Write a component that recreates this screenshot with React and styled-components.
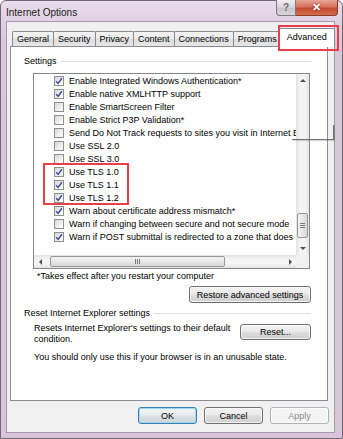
import React from 'react';
import styled, { createGlobalStyle } from 'styled-components';

const GlobalStyle = createGlobalStyle`
  html, body { margin: 0; padding: 0; background: #fff; }
  body {
    font-family: "Liberation Sans", Arial, sans-serif;
    font-size: 9px;
    color: #000;
  }
  * { box-sizing: border-box; }
`;

const Window = styled.div`
  width: 343px;
  height: 439px;
  display: flex;
  flex-direction: column;
  padding: 0 7px 5px 5px;
  background: linear-gradient(#e9dcec, #d9c6dd 40px, #d8c5dc);
  border: 1px solid #6f6873;
  border-radius: 6px 6px 0 0;
`;

const TitleBar = styled.div`
  height: 21px;
  display: flex;
  justify-content: space-between;
  align-items: flex-start;
  margin: -1px -4px 0 0;
`;

const Title = styled.div`
  font-size: 10px;
  line-height: 12px;
  padding-top: 7px;
  color: #1b1b1b;
`;

const Caption = styled.div`
  display: flex;
  margin-right: 1px;
`;

const CaptionButton = styled.div`
  height: 16px;
  width: ${p => (p.$close ? '42px' : '20px')};
  display: flex;
  align-items: center;
  justify-content: center;
  border: 1px solid ${p => (p.$close ? '#8a3b2c' : '#7d7a82')};
  border-top: none;
  border-left: ${p => (p.$close ? 'none' : '1px solid #7d7a82')};
  border-radius: ${p => (p.$close ? '0 0 4px 0' : '0 0 0 4px')};
  background: ${p =>
    p.$close
      ? 'linear-gradient(#e8a695, #d7725c 45%, #c44a2f 55%, #d46a4c)'
      : 'linear-gradient(#f1eef2, #dcd6de 45%, #cbc4ce 55%, #d9d2db)'};
  color: ${p => (p.$close ? '#fff' : '#6c6c72')};
  font-size: ${p => (p.$close ? '11px' : '10px')};
  font-weight: bold;
  text-shadow: ${p => (p.$close ? '0 0 2px #5a1d10' : 'none')};
`;

const Client = styled.div`
  flex: 1;
  display: flex;
  flex-direction: column;
  background: #f0f0f0;
  border: 1px solid #a698aa;
  padding: 0 6px 0 3px;
`;

const TabStrip = styled.div`
  height: 24px;
  display: flex;
  align-items: flex-end;
  padding-left: 2px;
`;

const Tab = styled.div`
  position: relative;
  height: ${p => (p.$active ? '19px' : '15px')};
  line-height: ${p => (p.$active ? '17px' : '15px')};
  padding: 0 ${p => (p.$active ? '7px' : '4px')};
  margin: 0 ${p => (p.$active ? '-2px' : '0')} ${p => (p.$active ? '-1px' : '0')} ${p => (p.$active ? '-3px' : '-1px')};
  border: 1px solid #898c95;
  border-bottom: none;
  border-radius: 2px 2px 0 0;
  background: ${p => (p.$active ? '#fff' : 'linear-gradient(#f3f3f3, #ebebeb 50%, #dddddd 51%, #e6e6e6)')};
  z-index: ${p => (p.$active ? 2 : 0)};
  white-space: nowrap;

  &:first-child { margin-left: 0; }

  ${p =>
    p.$marked &&
    `
    &::after {
      content: '';
      position: absolute;
      left: -2px;
      top: -4px;
      right: -5px;
      bottom: -4px;
      border: 2px solid #e8404a;
    }
  `}
`;

const Panel = styled.div`
  height: 355px;
  position: relative;
  z-index: 1;
  display: flex;
  flex-direction: column;
  background: #fff;
  border: 1px solid #898c95;
`;

const GroupHeader = styled.div`
  height: 12px;
  margin: ${p => p.$top}px 16px 0 13px;
  display: flex;
  align-items: center;
  gap: 4px;
  white-space: nowrap;

  &::after {
    content: '';
    flex: 1;
    height: 1px;
    background: #d5dfe5;
  }
`;

const List = styled.div`
  position: relative;
  margin: 6px 0 0 22px;
  width: 277px;
  height: 196px;
  border: 1px solid #828790;
  display: flex;
  flex-direction: column;
`;

const ListMain = styled.div`
  flex: 1;
  display: flex;
  min-height: 0;
`;

const Viewport = styled.div`
  flex: 1;
  overflow: hidden;
  position: relative;
`;

const Row = styled.div`
  height: 13px;
  display: flex;
  align-items: center;
  gap: 5px;
  padding-left: 20px;
  white-space: nowrap;
`;

const Highlight = styled.div`
  position: relative;

  &::after {
    content: '';
    position: absolute;
    left: 9px;
    top: -2px;
    width: 82px;
    bottom: -1px;
    border: 2px solid #e8404a;
  }
`;

const Box = styled.span`
  flex: none;
  width: 10px;
  height: 10px;
  border: 1px solid #8e8f8f;
  background: linear-gradient(135deg, #d6d6d6, #f4f4f4 70%, #fff);
  display: flex;
  align-items: center;
  justify-content: center;
`;

const Tip = styled.div`
  position: absolute;
  left: 258px;
  top: 51px;
  width: 42px;
  height: 15px;
  border-right: 1px solid #6f6f6f;
  border-bottom: 1px solid #6f6f6f;
  box-shadow: 1px 1px 1px rgba(0, 0, 0, 0.15);
  pointer-events: none;
`;

const VScroll = styled.div`
  width: 13px;
  display: flex;
  flex-direction: column;
  background: linear-gradient(90deg, #e3e3e3, #f4f4f4 30%, #f4f4f4 70%, #e3e3e3);
`;

const HScrollRow = styled.div`
  height: 13px;
  display: flex;
`;

const HScroll = styled.div`
  flex: 1;
  display: flex;
  align-items: center;
  background: linear-gradient(#e3e3e3, #f4f4f4 30%, #f4f4f4 70%, #e3e3e3);
`;

const Corner = styled.div`
  width: 13px;
  background: #f0f0f0;
`;

const Arrow = styled.div`
  flex: none;
  width: 13px;
  height: 13px;
  display: flex;
  align-items: center;
  justify-content: center;
`;

const Track = styled.div`
  flex: 1;
  display: flex;
  flex-direction: ${p => (p.$vertical ? 'column' : 'row')};
  align-items: center;
`;

const Thumb = styled.div`
  ${p =>
    p.$vertical
      ? `width: 11px; height: ${p.$size}px; margin-top: ${p.$offset}px;`
      : `height: 11px; width: ${p.$size}px; margin-left: ${p.$offset}px;`}
  border: 1px solid #979797;
  border-radius: 2px;
  background: ${p =>
    p.$vertical
      ? 'linear-gradient(90deg, #f3f3f3, #e8e8e8 50%, #d6d6d6)'
      : 'linear-gradient(#f3f3f3, #e8e8e8 50%, #d6d6d6)'};
  display: flex;
  align-items: center;
  justify-content: center;
`;

const Grip = styled.div`
  ${p =>
    p.$vertical
      ? 'width: 5px; height: 5px; background: repeating-linear-gradient(#7a7a7a 0 1px, transparent 1px 2px);'
      : 'width: 5px; height: 5px; background: repeating-linear-gradient(90deg, #7a7a7a 0 1px, transparent 1px 2px);'}
`;

const Note = styled.div`
  margin: 1px 0 0 26px;
  line-height: 12px;
`;

const Button = styled.div`
  width: ${p => p.$w}px;
  height: ${p => p.$h || 17}px;
  display: flex;
  align-items: center;
  justify-content: center;
  border: 1px solid ${p => (p.$default ? '#3c7fb1' : p.$disabled ? '#adb2b5' : '#707070')};
  border-radius: 3px;
  background: ${p =>
    p.$disabled
      ? '#f4f4f4'
      : p.$default
      ? 'linear-gradient(#f2f5f7, #e8edf0 45%, #dbe0e3 55%, #d0d6da)'
      : 'linear-gradient(#f2f2f2, #ebebeb 45%, #dddddd 55%, #cfcfcf)'};
  box-shadow: inset 0 0 0 1px ${p => (p.$default ? '#9fd6f3' : 'rgba(255,255,255,0.7)')};
  color: ${p => (p.$disabled ? '#8a8a8a' : '#000')};
`;

const RestoreButton = styled(Button)`
  align-self: flex-end;
  margin: 4px 16px 0 0;
`;

const ResetRow = styled.div`
  display: flex;
  align-items: flex-start;
  margin: 4px 16px 0 23px;
`;

const ResetText = styled.div`
  width: 200px;
  line-height: 11px;
`;

const ResetButton = styled(Button)`
  margin: 1px 0 0 auto;
`;

const Warning = styled.div`
  margin: 6px 0 0 23px;
  line-height: 12px;
`;

const ButtonRow = styled.div`
  flex: 1;
  display: flex;
  justify-content: flex-end;
  align-items: flex-start;
  gap: 7px;
  padding-top: 6px;
  margin-right: -1px;
`;

const Check = () => (
  <svg width="8" height="8" viewBox="0 0 8 8">
    <path d="M1.2 4.2 L3.1 6.4 L6.9 1.2" fill="none" stroke="#3c4fa3" strokeWidth="1.5" />
  </svg>
);

const Tri = ({ dir }) => {
  const pts = {
    up: '1,5 4,2 7,5',
    down: '1,2 4,5 7,2',
    left: '5,1 2,4 5,7',
    right: '3,1 6,4 3,7',
  }[dir];
  return (
    <svg width="8" height="8" viewBox="0 0 8 8">
      <polygon points={pts} fill="#505050" />
    </svg>
  );
};

const tabs = ['General', 'Security', 'Privacy', 'Content', 'Connections', 'Programs', 'Advanced'];

const items = [
  [true, 'Enable Integrated Windows Authentication*'],
  [true, 'Enable native XMLHTTP support'],
  [false, 'Enable SmartScreen Filter'],
  [false, 'Enable Strict P3P Validation*'],
  [false, 'Send Do Not Track requests to sites you visit in Internet Explorer*'],
  [false, 'Use SSL 2.0'],
  [false, 'Use SSL 3.0'],
  [true, 'Use TLS 1.0'],
  [true, 'Use TLS 1.1'],
  [true, 'Use TLS 1.2'],
  [true, 'Warn about certificate address mismatch*'],
  [false, 'Warn if changing between secure and not secure mode'],
  [true, 'Warn if POST submittal is redirected to a zone that does not permit posts'],
];

const Item = ({ checked, label }) => (
  <Row>
    <Box>{checked && <Check />}</Box>
    <span>{label}</span>
  </Row>
);

export default function App() {
  return (
    <>
      <GlobalStyle />
      <Window>
        <TitleBar>
          <Title>Internet Options</Title>
          <Caption>
            <CaptionButton>?</CaptionButton>
            <CaptionButton $close>✕</CaptionButton>
          </Caption>
        </TitleBar>
        <Client>
          <TabStrip>
            {tabs.map(t => (
              <Tab key={t} $active={t === 'Advanced'} $marked={t === 'Advanced'}>
                {t}
              </Tab>
            ))}
          </TabStrip>
          <Panel>
            <GroupHeader $top={8}>Settings</GroupHeader>
            <List>
              <ListMain>
                <Viewport>
                  {items.slice(0, 7).map(([c, l]) => (
                    <Item key={l} checked={c} label={l} />
                  ))}
                  <Highlight>
                    {items.slice(7, 10).map(([c, l]) => (
                      <Item key={l} checked={c} label={l} />
                    ))}
                  </Highlight>
                  {items.slice(10).map(([c, l]) => (
                    <Item key={l} checked={c} label={l} />
                  ))}
                </Viewport>
                <VScroll>
                  <Arrow><Tri dir="up" /></Arrow>
                  <Track $vertical>
                    <Thumb $vertical $size={25} $offset={126}>
                      <Grip $vertical />
                    </Thumb>
                  </Track>
                  <Arrow><Tri dir="down" /></Arrow>
                </VScroll>
              </ListMain>
              <HScrollRow>
                <HScroll>
                  <Arrow><Tri dir="left" /></Arrow>
                  <Track>
                    <Thumb $size={175} $offset={3}>
                      <Grip />
                    </Thumb>
                  </Track>
                  <Arrow><Tri dir="right" /></Arrow>
                </HScroll>
                <Corner />
              </HScrollRow>
              <Tip />
            </List>
            <Note>*Takes effect after you restart your computer</Note>
            <RestoreButton $w={122}>Restore advanced settings</RestoreButton>
            <GroupHeader $top={4}>Reset Internet Explorer settings</GroupHeader>
            <ResetRow>
              <ResetText>Resets Internet Explorer's settings to their default condition.</ResetText>
              <ResetButton $w={71} $h={16}>Reset...</ResetButton>
            </ResetRow>
            <Warning>You should only use this if your browser is in an unusable state.</Warning>
          </Panel>
          <ButtonRow>
            <Button $w={59} $default>OK</Button>
            <Button $w={59}>Cancel</Button>
            <Button $w={59} $disabled>Apply</Button>
          </ButtonRow>
        </Client>
      </Window>
    </>
  );
}
